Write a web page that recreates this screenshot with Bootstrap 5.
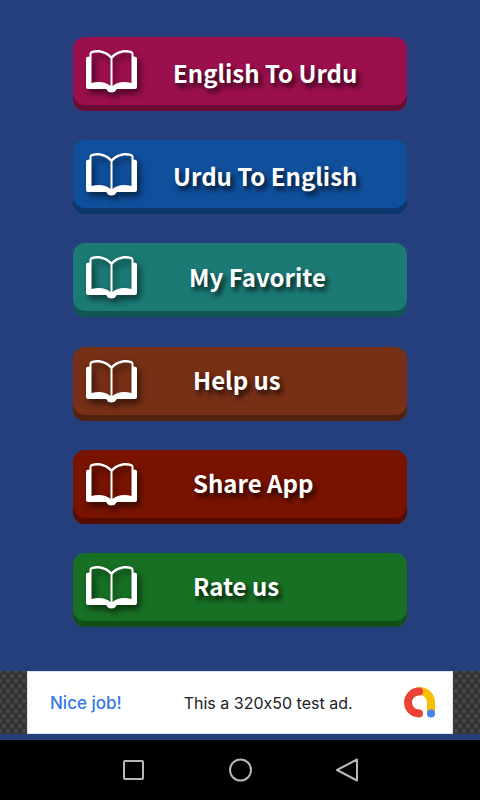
<!DOCTYPE html>
<html lang="en">
<head>
<meta charset="utf-8">
<meta name="viewport" content="width=device-width, initial-scale=1">
<title>English Urdu Dictionary</title>
<link href="https://cdn.jsdelivr.net/npm/bootstrap@5.3.0/dist/css/bootstrap.min.css" rel="stylesheet">
<style>
body { background: #253f7d; font-family: "Noto Sans", sans-serif; }
.menu-list { padding: 37px 73px 44px; }
.menu-btn {
  height: 74px; padding: 0 12px 5px 13px; border: 0; border-radius: 12px;
  background: var(--face); box-shadow: inset 0 -6px 0 var(--edge);
  color: #fff; font: 700 24px/32px "Noto Sans CJK SC", "Noto Sans", sans-serif;
}
.menu-btn svg { filter: drop-shadow(3px 4px 3px rgba(0, 0, 0, .6)); }
.menu-btn span { text-shadow: 3px 4px 5px rgba(0, 0, 0, .75); padding: 3px 0 0 36px; }
.menu-btn.mid span { padding-left: 52px; }
.menu-btn.short span { padding-left: 56px; }
.menu-btn.mid span, .menu-btn.short span { padding-top: 0; padding-bottom: 2px; }
.c-rose { --face: #9b0f4d; --edge: #6c0a36; }
.c-blue { --face: #0f4f9c; --edge: #0a376c; }
.c-teal { --face: #1b7a74; --edge: #135551; }
.c-brown { --face: #772f16; --edge: #53210f; }
.c-red { --face: #791300; --edge: #550d00; }
.c-green { --face: #187024; --edge: #114e19; }
.ad-band {
  padding: 0 27px; height: 63px; margin-bottom: 6px;
  background-color: #303030;
  background-image: radial-gradient(circle, #454545 2px, transparent 3px), radial-gradient(circle, #454545 2px, transparent 3px);
  background-size: 8px 10px; background-position: 0 0, 4px 5px;
}
.ad-link { padding: 0 17px 0 22px; background: #fff; border: 1px solid #dce4ee; color: #202124; font: 400 16px/24px Inter, sans-serif; font-feature-settings: "calt" 0; }
.ad-cta { color: #3578e5; font-weight: 500; font-size: 17px; margin-right: 62px; }
.sys-nav { height: 60px; padding-bottom: 2px; background: #000; }
.sys-nav button { width: 107px; color: #b8b8b8; }
</style>
<script src="https://cdn.jsdelivr.net/npm/bootstrap@5.3.0/dist/js/bootstrap.bundle.min.js"></script>
</head>
<body>
<svg class="d-none" aria-hidden="true">
  <symbol id="book" viewBox="0 0 51 43">
    <path fill="#fff" fill-rule="evenodd" d="M25.500 6C21 1.500 13 -1.500 5.500 1Q3.500 1.500 3.500 3.500V6.500Q0 6.500 0 8.500V37Q0 39 2 39H20C21 39 21 42.500 25.500 42.500S30 39 31 39H49Q51 39 51 37V8.500Q51 6.500 47.500 6.500V3.500Q47.500 1.500 45.500 1C38 -1.500 30 1.500 25.500 6ZM5.500 3.500C12 1 20 3 24.500 8.500V36C20 32 13 31 5.500 33ZM45.500 3.500C39 1 31 3 26.500 8.500V36C31 32 38 31 45.500 33Z"/>
  </symbol>
</svg>
<div class="d-flex flex-column min-vh-100">
  <main class="menu-list flex-grow-1 d-flex flex-column justify-content-between">
    <button type="button" class="menu-btn c-rose d-flex align-items-center w-100"><svg width="51" height="43" aria-hidden="true"><use href="#book"/></svg><span>English To Urdu</span></button>
    <button type="button" class="menu-btn c-blue d-flex align-items-center w-100"><svg width="51" height="43" aria-hidden="true"><use href="#book"/></svg><span>Urdu To English</span></button>
    <button type="button" class="menu-btn mid c-teal d-flex align-items-center w-100"><svg width="51" height="43" aria-hidden="true"><use href="#book"/></svg><span>My Favorite</span></button>
    <button type="button" class="menu-btn short c-brown d-flex align-items-center w-100"><svg width="51" height="43" aria-hidden="true"><use href="#book"/></svg><span>Help us</span></button>
    <button type="button" class="menu-btn short c-red d-flex align-items-center w-100"><svg width="51" height="43" aria-hidden="true"><use href="#book"/></svg><span>Share App</span></button>
    <button type="button" class="menu-btn short c-green d-flex align-items-center w-100"><svg width="51" height="43" aria-hidden="true"><use href="#book"/></svg><span>Rate us</span></button>
  </main>
  <aside class="ad-band d-flex" aria-label="Advertisement">
    <a href="#" class="ad-link flex-grow-1 d-flex align-items-center text-decoration-none">
      <span class="ad-cta">Nice job!</span>
      <span>This a 320x50 test ad.</span>
      <svg class="ms-auto" width="32" height="31" viewBox="0 0 32 31" fill="none" stroke-linecap="round" aria-hidden="true">
        <path stroke="#fbbc04" stroke-width="8" d="M16 4C23 4 28 9 28 16V26"/>
        <path stroke="#ea4335" stroke-width="8" d="M16 4.500A11 11 0 0 0 16 26.500"/>
        <circle cx="28" cy="26.500" r="4" fill="#4285f4"/>
      </svg>
    </a>
  </aside>
  <nav class="sys-nav d-flex justify-content-center" aria-label="System">
    <button type="button" class="btn p-0 border-0" aria-label="Recent apps"><svg width="24" height="24" fill="none" stroke="currentColor" stroke-width="2"><rect x="3" y="3" width="19" height="18" rx="1"/></svg></button>
    <button type="button" class="btn p-0 border-0" aria-label="Home"><svg width="24" height="24" fill="none" stroke="currentColor" stroke-width="2"><circle cx="12.500" cy="12" r="10.500"/></svg></button>
    <button type="button" class="btn p-0 border-0" aria-label="Back"><svg width="24" height="24" fill="none" stroke="currentColor" stroke-width="2" stroke-linejoin="round"><path d="M22 1.500V22.500L2 12Z"/></svg></button>
  </nav>
</div>
</body>
</html>
